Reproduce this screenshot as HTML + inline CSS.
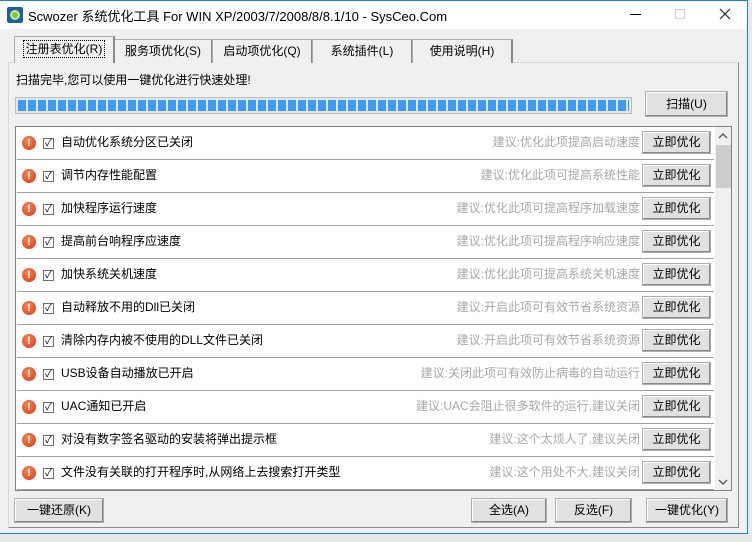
<!DOCTYPE html>
<html><head><meta charset="utf-8"><style>
*{margin:0;padding:0;box-sizing:border-box}
body{width:752px;height:542px;background:#e8e8e8;position:relative;overflow:hidden;font-family:"Liberation Sans","Noto Sans CJK SC","WenQuanYi Zen Hei",sans-serif;font-size:12px;color:#000}
.win{position:absolute;left:0;top:0;width:748px;height:534px;background:#f0f0f0;border:1px solid #1883d7;border-left:none}
.title{position:absolute;left:0;top:0;width:747px;height:28px;background:#fff}
.title .t{position:absolute;left:28px;top:5px;font-size:13px}
.abs{position:absolute}
.tab{position:absolute;top:38px;height:24px;border:1px solid #adadad;border-bottom:none;background:#f0f0f0;text-align:center;line-height:22px;font-size:12px;border-right:2px solid #888}
.panel{position:absolute;left:8px;top:61px;width:731px;height:466px;border:1px solid #d9d9d9;border-right:1px solid #888;border-bottom:1px solid #888;background:#f0f0f0}
.btn{position:absolute;border:1px solid #adadad;background:#e1e1e1;text-align:center;font-size:12px;box-shadow:inset -1px -1px 0 #888, inset 1px 1px 0 #fff}
.list{position:absolute;left:15px;top:125px;width:717px;height:365px;border:1px solid #828282;background:#fff;overflow:hidden}
.row{position:absolute;left:1px;width:697px;height:33px;border-bottom:1px solid #a0a0a0}
.ic{position:absolute;left:5px;top:9px;width:14px;height:14px;border-radius:50%;background:radial-gradient(circle at 40% 35%,#f7834f,#d9361a);color:#fff;font-weight:bold;font-size:11px;line-height:14px;text-align:center}
.cb{position:absolute;left:26px;top:11px;width:11px;height:11px;border:1px solid #707070;background:#fff;font-size:10px;line-height:9px;text-align:center}
.tx{position:absolute;left:44px;top:6px;font-size:12px}
.sg{position:absolute;right:74px;top:6px;color:#a8a8a8;font-size:12px}
.rb{position:absolute;right:3px;top:4px;width:69px;height:23px;line-height:21px}
</style></head><body>
<div class="win">
<div class="title">
<div class="abs" style="left:7px;top:6px;width:16px;height:16px;background:#1e5fa8;border-radius:2px"><div class="abs" style="left:3px;top:3px;width:10px;height:10px;border-radius:50%;background:#7ac943;border:2px solid #c9e98f"></div></div>
<div class="t">Scwozer 系统优化工具 For WIN XP/2003/7/2008/8/8.1/10 - SysCeo.Com</div>
<div class="abs" style="left:630px;top:13px;width:11px;height:1px;background:#000"></div>
<div class="abs" style="left:675px;top:8px;width:10px;height:10px;border:1px solid #ccc"></div>
<svg class="abs" style="left:719px;top:7px" width="12" height="12"><path d="M1 1L11 11M11 1L1 11" stroke="#222" stroke-width="1.2"/></svg>
</div>
<div class="panel"></div>
<div class="tab" style="left:14px;top:35px;width:101px;height:27px;border-bottom:none;z-index:2;background:#f0f0f0;line-height:24px"><span style="border:1px dotted #000;padding:1px 2px">注册表优化(R)</span></div>
<div class="tab" style="left:114px;width:99px">服务项优化(S)</div>
<div class="tab" style="left:212px;width:101px">启动项优化(Q)</div>
<div class="tab" style="left:312px;width:101px">系统插件(L)</div>
<div class="tab" style="left:412px;width:101px">使用说明(H)</div>
<div class="abs" style="left:16px;top:70px">扫描完毕,您可以使用一键优化进行快速处理!</div>
<div class="abs" style="left:15px;top:96px;width:617px;height:17px;border:1px solid #bcbcbc;background:#e6e6e6;padding:2px;">
<div style="width:100%;height:11px;background:repeating-linear-gradient(90deg,#3a9cf8 0 8px,#e6e6e6 8px 10px)"></div></div>
<div class="btn" style="left:645px;top:90px;width:83px;height:26px;line-height:24px">扫描(U)</div>
<div class="list">
<div class="row" style="top:0"><div class="ic">!</div><div class="cb">✓</div><div class="tx">自动优化系统分区已关闭</div><div class="sg">建议:优化此项提高启动速度</div><div class="btn rb">立即优化</div></div>
<div class="row" style="top:33px"><div class="ic">!</div><div class="cb">✓</div><div class="tx">调节内存性能配置</div><div class="sg">建议:优化此项可提高系统性能</div><div class="btn rb">立即优化</div></div>
<div class="row" style="top:66px"><div class="ic">!</div><div class="cb">✓</div><div class="tx">加快程序运行速度</div><div class="sg">建议:优化此项可提高程序加载速度</div><div class="btn rb">立即优化</div></div>
<div class="row" style="top:99px"><div class="ic">!</div><div class="cb">✓</div><div class="tx">提高前台响程序应速度</div><div class="sg">建议:优化此项可提高程序响应速度</div><div class="btn rb">立即优化</div></div>
<div class="row" style="top:132px"><div class="ic">!</div><div class="cb">✓</div><div class="tx">加快系统关机速度</div><div class="sg">建议:优化此项可提高系统关机速度</div><div class="btn rb">立即优化</div></div>
<div class="row" style="top:165px"><div class="ic">!</div><div class="cb">✓</div><div class="tx">自动释放不用的Dll已关闭</div><div class="sg">建议:开启此项可有效节省系统资源</div><div class="btn rb">立即优化</div></div>
<div class="row" style="top:198px"><div class="ic">!</div><div class="cb">✓</div><div class="tx">清除内存内被不使用的DLL文件已关闭</div><div class="sg">建议:开启此项可有效节省系统资源</div><div class="btn rb">立即优化</div></div>
<div class="row" style="top:231px"><div class="ic">!</div><div class="cb">✓</div><div class="tx">USB设备自动播放已开启</div><div class="sg">建议:关闭此项可有效防止病毒的自动运行</div><div class="btn rb">立即优化</div></div>
<div class="row" style="top:264px"><div class="ic">!</div><div class="cb">✓</div><div class="tx">UAC通知已开启</div><div class="sg">建议:UAC会阻止很多软件的运行,建议关闭</div><div class="btn rb">立即优化</div></div>
<div class="row" style="top:297px"><div class="ic">!</div><div class="cb">✓</div><div class="tx">对没有数字签名驱动的安装将弹出提示框</div><div class="sg">建议:这个太烦人了,建议关闭</div><div class="btn rb">立即优化</div></div>
<div class="row" style="top:330px"><div class="ic">!</div><div class="cb">✓</div><div class="tx">文件没有关联的打开程序时,从网络上去搜索打开类型</div><div class="sg">建议:这个用处不大,建议关闭</div><div class="btn rb">立即优化</div></div>
<div class="abs" style="left:699px;top:0;width:16px;height:363px;background:#f0f0f0"></div>
<svg class="abs" style="left:702px;top:6px" width="10" height="6"><path d="M1 5L5 1L9 5" stroke="#606060" stroke-width="1.5" fill="none"/></svg>
<div class="abs" style="left:700px;top:18px;width:15px;height:43px;background:#cdcdcd"></div>
<svg class="abs" style="left:702px;top:352px" width="10" height="6"><path d="M1 1L5 5L9 1" stroke="#606060" stroke-width="1.5" fill="none"/></svg>
</div>
<div class="btn" style="left:14px;top:497px;width:90px;height:25px;line-height:23px">一键还原(K)</div>
<div class="btn" style="left:471px;top:497px;width:76px;height:25px;line-height:23px">全选(A)</div>
<div class="btn" style="left:555px;top:497px;width:77px;height:25px;line-height:23px">反选(F)</div>
<div class="btn" style="left:646px;top:497px;width:82px;height:25px;line-height:23px">一键优化(Y)</div>
</div>
</body></html>
